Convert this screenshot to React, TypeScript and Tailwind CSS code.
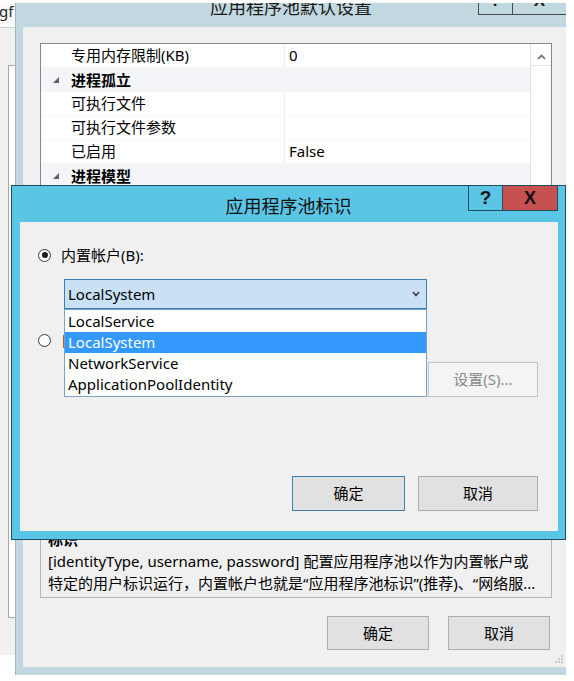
import React from "react";

type RowProps = { label: string; value?: string; cat?: boolean };

function GridRow({ label, value, cat }: RowProps) {
  if (cat) {
    return (
      <div className="h-[24px] flex items-center bg-[#f3f5f9] shrink-0">
        <div className="w-[21px] h-full flex items-center pl-[12px]">
          <svg width="6" height="6" viewBox="0 0 6 6">
            <polygon points="0,6 6,6 6,0" fill="#606060" />
          </svg>
        </div>
        <div className="pl-[9px] font-bold whitespace-nowrap">{label}</div>
      </div>
    );
  }
  return (
    <div className="h-[24px] flex items-center shrink-0 border-b border-[#f7f7f7]">
      <div className="w-[21px] h-full" />
      <div className="w-[223px] h-full flex items-center pl-[9px] border-r border-[#ececec] whitespace-nowrap">
        {label}
      </div>
      <div className="flex-1 h-full flex items-center pl-[4px] whitespace-nowrap">{value}</div>
    </div>
  );
}

function Radio({ checked }: { checked?: boolean }) {
  return (
    <div className="w-[13px] h-[13px] rounded-full border border-[#3a3a3a] bg-white flex items-center justify-center shrink-0">
      {checked ? <div className="w-[6px] h-[6px] rounded-full bg-[#1e1e1e]" /> : null}
    </div>
  );
}

export default function App() {
  return (
    <div className="relative w-[574px] h-[681px] overflow-hidden bg-white font-['Noto_Sans','Noto_Sans_CJK_SC',sans-serif] text-[15px] text-black">
      {/* window fragment on the left */}
      <div className="absolute left-0 top-0 w-[16px] h-[681px] flex flex-col">
        <div className="h-[28px] bg-[#fafafa] border-b border-[#c5cfd6] pt-[2px] overflow-hidden">
          <span className="block -ml-[1px] text-[15px] leading-[18px] text-[#222]">gf</span>
        </div>
        <div className="h-[627px] bg-[#f0f0f0] pt-[37px] pl-[8px]">
          <div className="h-[553px] bg-white border-l border-t border-b border-[#a8a8a8]" />
        </div>
        <div className="flex-1 bg-white" />
      </div>

      {/* background dialog */}
      <div className="absolute left-[15px] top-[-12px] w-[551px] h-[687px] flex flex-col bg-[#c2d8e0] border-l border-[#9db7c2]">
        <div className="relative h-[39px] shrink-0 flex items-center justify-center text-[18px] text-[#1a1a1a]">
          应用程序池默认设置
          <div className="absolute right-0 top-0 flex">
            <div className="w-[34px] h-[27px] border-l border-b border-[#4a4a4a] flex items-center justify-center text-[17px] font-bold font-['Liberation_Sans',sans-serif]">
              ?
            </div>
            <div className="w-[54px] h-[27px] border-l border-b border-[#4a4a4a] flex items-center justify-center text-[17px] font-bold font-['Liberation_Sans',sans-serif]">
              X
            </div>
          </div>
        </div>
        <div className="flex-1 flex pl-[7px] pb-[8px]">
          <div className="flex-1 bg-[#f0f0f0] flex flex-col pt-[16px] pl-[17px] pr-[14px]">
            {/* property grid */}
            <div className="h-[474px] shrink-0 border border-[#828790] bg-white flex">
              <div className="flex-1 flex flex-col overflow-hidden">
                <GridRow label="专用内存限制(KB)" value="0" />
                <GridRow label="进程孤立" cat />
                <GridRow label="可执行文件" value="" />
                <GridRow label="可执行文件参数" value="" />
                <GridRow label="已启用" value="False" />
                <GridRow label="进程模型" cat />
                <GridRow label="Ping 间隔(秒)" value="30" />
                <GridRow label="Ping 最大响应时间(秒)" value="90" />
                <GridRow label="标识" value="LocalSystem" />
                <GridRow label="空闲超时(分钟)" value="20" />
                <GridRow label="关闭时间限制(秒)" value="90" />
                <GridRow label="加载用户配置文件" value="False" />
                <GridRow label="启动时间限制(秒)" value="90" />
                <GridRow label="已启用 Ping" value="True" />
                <GridRow label="最大工作进程数" value="1" />
              </div>
              <div className="w-[21px] border-l border-[#e2e2e2] bg-white flex flex-col">
                <div className="h-[22px] border-b border-[#e6e6e6] flex items-center justify-center pt-[4px]">
                  <svg width="9" height="6" viewBox="0 0 9 6">
                    <polyline points="1,5 4.5,1.5 8,5" fill="none" stroke="#6a6a6a" strokeWidth="1.6" />
                  </svg>
                </div>
              </div>
            </div>

            {/* description */}
            <div className="mt-[7px] h-[74px] shrink-0 border border-[#b4b4b4] px-[7px] pt-[3px] leading-[22px] overflow-hidden">
              <div className="font-bold">标识</div>
              <div className="whitespace-nowrap">[identityType, username, password] 配置应用程序池以作为内置帐户或</div>
              <div className="whitespace-nowrap">特定的用户标识运行，内置帐户也就是“应用程序池标识”(推荐)、“网络服...</div>
            </div>

            {/* buttons */}
            <div className="mt-[18px] flex justify-end gap-[19px] pr-[2px] shrink-0">
              <div className="w-[102px] h-[34px] border border-[#adadad] bg-[#e1e1e1] flex items-center justify-center">确定</div>
              <div className="w-[102px] h-[34px] border border-[#adadad] bg-[#e1e1e1] flex items-center justify-center">取消</div>
            </div>
            <div className="flex-1 flex items-end justify-end pb-[4px] -mr-[11px]">
              <svg width="8" height="8" viewBox="0 0 8 8">
                <rect x="6" y="0" width="2" height="2" fill="#c8c8c8" />
                <rect x="3" y="3" width="2" height="2" fill="#c8c8c8" />
                <rect x="6" y="3" width="2" height="2" fill="#c8c8c8" />
                <rect x="0" y="6" width="2" height="2" fill="#c8c8c8" />
                <rect x="3" y="6" width="2" height="2" fill="#c8c8c8" />
                <rect x="6" y="6" width="2" height="2" fill="#c8c8c8" />
              </svg>
            </div>
          </div>
        </div>
      </div>

      {/* white strip at very top */}
      <div className="absolute left-0 top-0 w-[574px] h-[3px] bg-white" />

      {/* foreground dialog */}
      <div className="absolute left-[11px] top-[185px] w-[555px] h-[355px] border border-[#1f4e63] bg-[#5bc5e6] flex flex-col">
        <div className="relative h-[36px] shrink-0 flex items-center justify-center pt-[5px] text-[18px] text-[#111]">
          应用程序池标识
          <div className="absolute top-0 right-[7px] flex">
            <div className="w-[34px] h-[25px] border-l border-b border-[#1f4e63] flex items-center justify-center text-[19px] font-bold font-['Liberation_Sans',sans-serif]">
              ?
            </div>
            <div className="w-[56px] h-[25px] bg-[#c75050] border-l border-r border-b border-[#1f4e63] flex items-center justify-center text-[18px] font-bold font-['Liberation_Sans',sans-serif]">
              X
            </div>
          </div>
        </div>
        <div className="flex-1 flex pl-[8px] pr-[7px] pb-[8px]">
          <div className="relative flex-1 bg-[#f0f0f0] flex flex-col pl-[18px] pr-[20px]">
            <div className="mt-[23px] h-[20px] flex items-center">
              <Radio checked />
              <span className="ml-[10px]">内置帐户(B):</span>
            </div>
            <div className="ml-[26px] mt-[14px] w-[363px] h-[30px] border border-[#3c7fb1] bg-[#c9e0f5] flex items-center justify-between pl-[3px] pr-[6px]">
              <span>LocalSystem</span>
              <svg width="8" height="6" viewBox="0 0 8 6">
                <polyline points="1,1 4,4.5 7,1" fill="none" stroke="#404040" strokeWidth="1.7" />
              </svg>
            </div>
            <div className="mt-[21px] h-[20px] flex items-center">
              <Radio />
              <span className="ml-[10px]">自定义帐户(C):</span>
            </div>
            <div className="mt-[12px] h-[35px] flex">
              <div className="ml-[26px] w-[354px] h-[35px] border border-[#cccccc] bg-[#f0f0f0]" />
              <div className="ml-auto w-[110px] h-[35px] border border-[#c4c4c4] bg-[#f4f4f4] text-[#8a8a8a] flex items-center justify-center">
                设置(S)...
              </div>
            </div>
            <div className="mt-[79px] flex justify-end gap-[13px]">
              <div className="w-[113px] h-[35px] border border-[#3c7fb1] bg-[#e1e1e1] flex items-center justify-center">确定</div>
              <div className="w-[120px] h-[35px] border border-[#adadad] bg-[#e1e1e1] flex items-center justify-center">取消</div>
            </div>

            {/* open dropdown list */}
            <div className="absolute left-[44px] top-[87px] w-[363px] h-[88px] bg-white border border-[#7ba2c6] pt-[1px] flex flex-col">
              <div className="h-[21px] pl-[3px] flex items-center">LocalService</div>
              <div className="h-[21px] pl-[3px] flex items-center bg-[#3399ff] text-white">LocalSystem</div>
              <div className="h-[21px] pl-[3px] flex items-center">NetworkService</div>
              <div className="h-[21px] pl-[3px] flex items-center">ApplicationPoolIdentity</div>
            </div>
          </div>
        </div>
      </div>
    </div>
  );
}
